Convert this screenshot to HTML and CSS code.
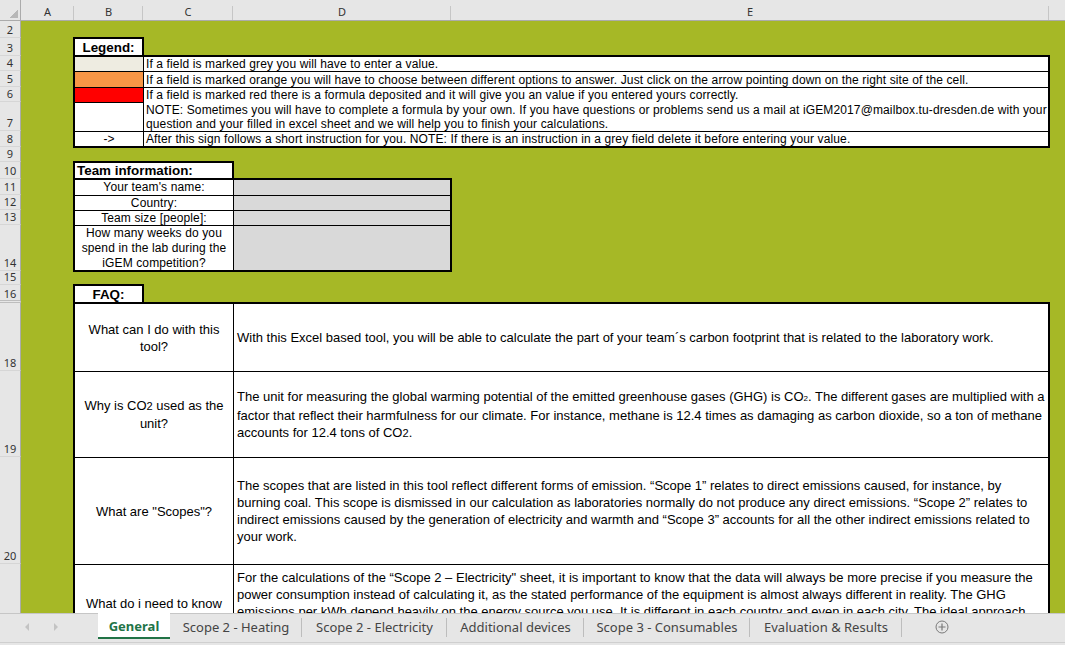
FILE: index.html
```html
<!DOCTYPE html>
<html lang="en">
<head>
<meta charset="utf-8">
<title>Carbon footprint tool - General</title>
<link rel="stylesheet" href="styles.css">
</head>
<body>
<div class="app">
  <div class="sheet">
    <div class="corner"></div>
    <div class="ch">A</div>
    <div class="ch">B</div>
    <div class="ch">C</div>
    <div class="ch">D</div>
    <div class="ch">E</div>
    <div class="ch last"></div>

    <div class="rh">2</div>
    <div class="rh">3</div>
    <div class="rh">4</div>
    <div class="rh">5</div>
    <div class="rh">6</div>
    <div class="rh">7</div>
    <div class="rh">8</div>
    <div class="rh">9</div>
    <div class="rh">10</div>
    <div class="rh">11</div>
    <div class="rh">12</div>
    <div class="rh">13</div>
    <div class="rh">14</div>
    <div class="rh">15</div>
    <div class="rh hidden-next">16</div>
    <div class="rh">18</div>
    <div class="rh">19</div>
    <div class="rh">20</div>
    <div class="rh"></div>

    <div class="box title legend-title"><p>Legend:</p></div>
    <div class="box legend">
      <div class="sw grey"></div>
      <div class="lt"><p>If a field is marked grey you will have to enter a value.</p></div>
      <div class="sw orange"></div>
      <div class="lt"><p>If a field is marked orange you will have to choose between different options to answer. Just click on the arrow pointing down on the right site of the cell.</p></div>
      <div class="sw red"></div>
      <div class="lt merged"><p>If a field is marked red there is a formula deposited and it will give you an value if you entered yours correctly.<br>NOTE: Sometimes you will have to complete a formula by your own. If you have questions or problems send us a mail at iGEM2017@mailbox.tu-dresden.de with your<br>question and your filled in excel sheet and we will help you to finish your calculations.</p></div>
      <div class="sw"></div>
      <div class="sw arrow"><p>-&gt;</p></div>
      <div class="lt"><p>After this sign follows a short instruction for you. NOTE: If there is an instruction in a grey field delete it before entering your value.</p></div>
    </div>

    <div class="box title left team-title"><p>Team information:</p></div>
    <div class="box team">
      <div class="tl"><p>Your team's name:</p></div><div class="tv"></div>
      <div class="tl"><p>Country:</p></div><div class="tv"></div>
      <div class="tl"><p>Team size [people]:</p></div><div class="tv"></div>
      <div class="tl"><p>How many weeks do you<br>spend in the lab during the<br>iGEM competition?</p></div><div class="tv"></div>
    </div>

    <div class="box title faq-title"><p>FAQ:</p></div>
    <div class="box faq">
      <div class="q"><p>What can I do with this<br>tool?</p></div>
      <div class="a"><p>With this Excel based tool, you will be able to calculate the part of your team´s carbon footprint that is related to the laboratory work.</p></div>
      <div class="q"><p>Why is CO<span class="two">2</span> used as the<br>unit?</p></div>
      <div class="a"><p>The unit for measuring the global warming potential of the emitted greenhouse gases (GHG) is CO<span class="sub">2</span>. The different gases are multiplied with a<br>factor that reflect their harmfulness for our climate. For instance, methane is 12.4 times as damaging as carbon dioxide, so a ton of methane<br>accounts for 12.4 tons of CO<span class="two">2</span>.</p></div>
      <div class="q"><p>What are "Scopes"?</p></div>
      <div class="a"><p>The scopes that are listed in this tool reflect different forms of emission. “Scope 1” relates to direct emissions caused, for instance, by<br>burning coal. This scope is dismissed in our calculation as laboratories normally do not produce any direct emissions. “Scope 2” relates to<br>indirect emissions caused by the generation of electricity and warmth and “Scope 3” accounts for all the other indirect emissions related to<br>your work.</p></div>
      <div class="q top"><p>What do i need to know</p></div>
      <div class="a top"><p>For the calculations of the “Scope 2 – Electricity" sheet, it is important to know that the data will always be more precise if you measure the<br>power consumption instead of calculating it, as the stated performance of the equipment is almost always different in reality. The GHG<br>emissions per kWh depend heavily on the energy source you use. It is different in each country and even in each city. The ideal approach</p></div>
    </div>
  </div>

  <div class="tabbar">
    <div class="nav">
      <svg class="navarrow" width="6" height="8" viewBox="0 0 6 8"><polygon points="5,0 5,8 1,4" fill="#c3c3c3"/></svg>
      <svg class="navarrow" width="6" height="8" viewBox="0 0 6 8"><polygon points="1,0 1,8 5,4" fill="#c3c3c3"/></svg>
    </div>
    <div class="tab active">General</div>
    <div class="tab">Scope 2 - Heating</div>
    <div class="tab">Scope 2 - Electricity</div>
    <div class="tab">Additional devices</div>
    <div class="tab">Scope 3 - Consumables</div>
    <div class="tab">Evaluation &amp; Results</div>
    <div class="addsheet">
      <svg width="14" height="14" viewBox="0 0 14 14"><circle cx="7" cy="7" r="6" fill="none" stroke="#7a7a7a" stroke-width="1"/><path d="M7 3.5v7M3.5 7h7" stroke="#7a7a7a" stroke-width="1.2"/></svg>
    </div>
  </div>
</div>
</body>
</html>
```
FILE: styles.css
```css
* { box-sizing: border-box; }
html, body { margin: 0; padding: 0; }
body {
  width: 1065px;
  height: 645px;
  overflow: hidden;
  background: #e6e6e6;
  font-family: "Liberation Sans", Arial, sans-serif;
  color: #000;
}
p { margin: 0; }

.app { display: flex; flex-direction: column; height: 645px; }

.sheet {
  display: grid;
  grid-template-columns: 21px 53px 69px 90px 218px 598px 16px;
  grid-template-rows: 21px 17px 18px 15px 16px 15px 29px 16px 15px 17px 16px 15px 15px 46px 14px 18px 68px 86px 107px 96px;
  height: 613px;
  flex: none;
  overflow: hidden;
  background: #a6b826;
}

/* headers */
.corner {
  grid-row: 1;
  grid-column: 1;
  border-right: 1px solid #ababab;
  border-bottom: 1px solid #ababab;
  background:
    linear-gradient(135deg, transparent 50%, #b7b7b7 50%) right 2px bottom 2px / 8px 8px no-repeat,
    #e6e6e6;
}
.ch {
  grid-row: 1;
  display: flex;
  align-items: center;
  justify-content: center;
  padding-top: 2px;
  font-family: "Noto Sans", "Open Sans", sans-serif;
  font-size: 11px;
  color: #333;
  border-bottom: 1px solid #ababab;
  background:
    linear-gradient(#c6c6c6, #c6c6c6) right bottom / 1px 14px no-repeat,
    #e6e6e6;
}
.ch.last { background: #e6e6e6; }
.rh {
  grid-column: 1;
  display: flex;
  align-items: flex-end;
  justify-content: center;
  font-family: "Noto Sans", "Open Sans", sans-serif;
  font-size: 11px;
  line-height: 14px;
  color: #333;
  background: #e6e6e6;
  border-right: 1px solid #ababab;
  border-bottom: 1px solid #d6d6d6;
}
.rh.hidden-next { border-bottom: 3px double #bdbdbd; line-height: 13px; }

/* bordered blocks */
.box {
  margin: -1px;
  border: 2px solid #000;
  background: #000;
  display: grid;
  gap: 1px;
  min-width: 0;
  min-height: 0;
}
.title {
  background: #fff;
  display: flex;
  align-items: center;
  justify-content: center;
  font-weight: bold;
  font-size: 13.4px;
  z-index: 1;
}
.title.left { justify-content: flex-start; padding-left: 2px; }

.legend-title { grid-row: 3; grid-column: 3; }
.team-title { grid-row: 10; grid-column: 3 / 5; }
.faq-title { grid-row: 16; grid-column: 3; }

/* legend */
.legend {
  grid-row: 4 / 9;
  grid-column: 3 / 7;
  grid-template-columns: 68px 1fr;
  grid-template-rows: 14px 15px 14px 28px 14px;
}
.sw { background: #fff; display: flex; align-items: center; justify-content: center; font-size: 12px; }
.sw.grey { background: #eeece1; }
.sw.orange { background: #f79646; }
.sw.red { background: #ff0000; }
.lt {
  background: #fff;
  display: flex;
  align-items: center;
  padding-left: 2px;
  font-size: 12px;
  line-height: 14px;
  letter-spacing: 0.12px;
  white-space: nowrap;
  overflow: hidden;
}
.lt.merged {
  grid-row: span 2;
  align-items: flex-start;
  padding-top: 0;
  line-height: 14.5px;
}

/* team information */
.team {
  grid-row: 11 / 15;
  grid-column: 3 / 6;
  grid-template-columns: 158px 1fr;
  grid-template-rows: 15px 14px 14px 44px;
}
.tl {
  background: #fff;
  display: flex;
  align-items: center;
  justify-content: center;
  text-align: center;
  font-size: 12px;
  line-height: 15px;
  letter-spacing: 0.12px;
  white-space: nowrap;
}
.tv { background: #d9d9d9; }

/* FAQ */
.faq {
  grid-row: 17 / 21;
  grid-column: 3 / 7;
  grid-template-columns: 158px 1fr;
  grid-template-rows: 67px 85px 106px 1fr;
}
.q {
  background: #fff;
  display: flex;
  align-items: center;
  justify-content: center;
  text-align: center;
  font-size: 13px;
  line-height: 17px;
  white-space: nowrap;
  overflow: hidden;
}
.a {
  background: #fff;
  display: flex;
  align-items: center;
  padding-left: 3px;
  font-size: 13px;
  line-height: 17px;
  white-space: nowrap;
  overflow: hidden;
}
.q.top { align-items: flex-start; padding-top: 30px; }
.a.top { align-items: flex-start; padding-top: 4px; }
.two { font-size: 0.85em; }
.sub { font-size: 0.62em; }

/* sheet tabs */
.tabbar {
  flex: 1;
  display: flex;
  align-items: flex-start;
  border-top: 1px solid #c6c6c6;
  background:
    linear-gradient(#cfcfcf, #cfcfcf) left 28px / 100% 1px no-repeat,
    #e6e6e6;
  font-family: "Noto Sans", "Open Sans", sans-serif;
  font-size: 13px;
  color: #444;
}
.nav {
  width: 98px;
  height: 26px;
  display: flex;
  align-items: center;
  gap: 23px;
  padding-left: 24px;
  flex: none;
}
.tab {
  flex: none;
  height: 25px;
  display: flex;
  align-items: center;
  justify-content: center;
  white-space: nowrap;
  background: linear-gradient(#bdbdbd, #bdbdbd) right 4px / 1px 19px no-repeat;
}
.tab.active {
  width: 72px;
  height: 26px;
  margin-top: -1px;
  background: #fff;
  color: #217346;
  font-weight: bold;
  border-bottom: 2px solid #217346;
  padding-top: 1px;
}
.tab:nth-child(3) { width: 132px; }
.tab:nth-child(4) { width: 145px; }
.tab:nth-child(5) { width: 137px; }
.tab:nth-child(6) { width: 166px; }
.tab:nth-child(7) { width: 152px; }
.addsheet {
  flex: none;
  height: 25px;
  display: flex;
  align-items: center;
  padding-left: 33px;
}
```
